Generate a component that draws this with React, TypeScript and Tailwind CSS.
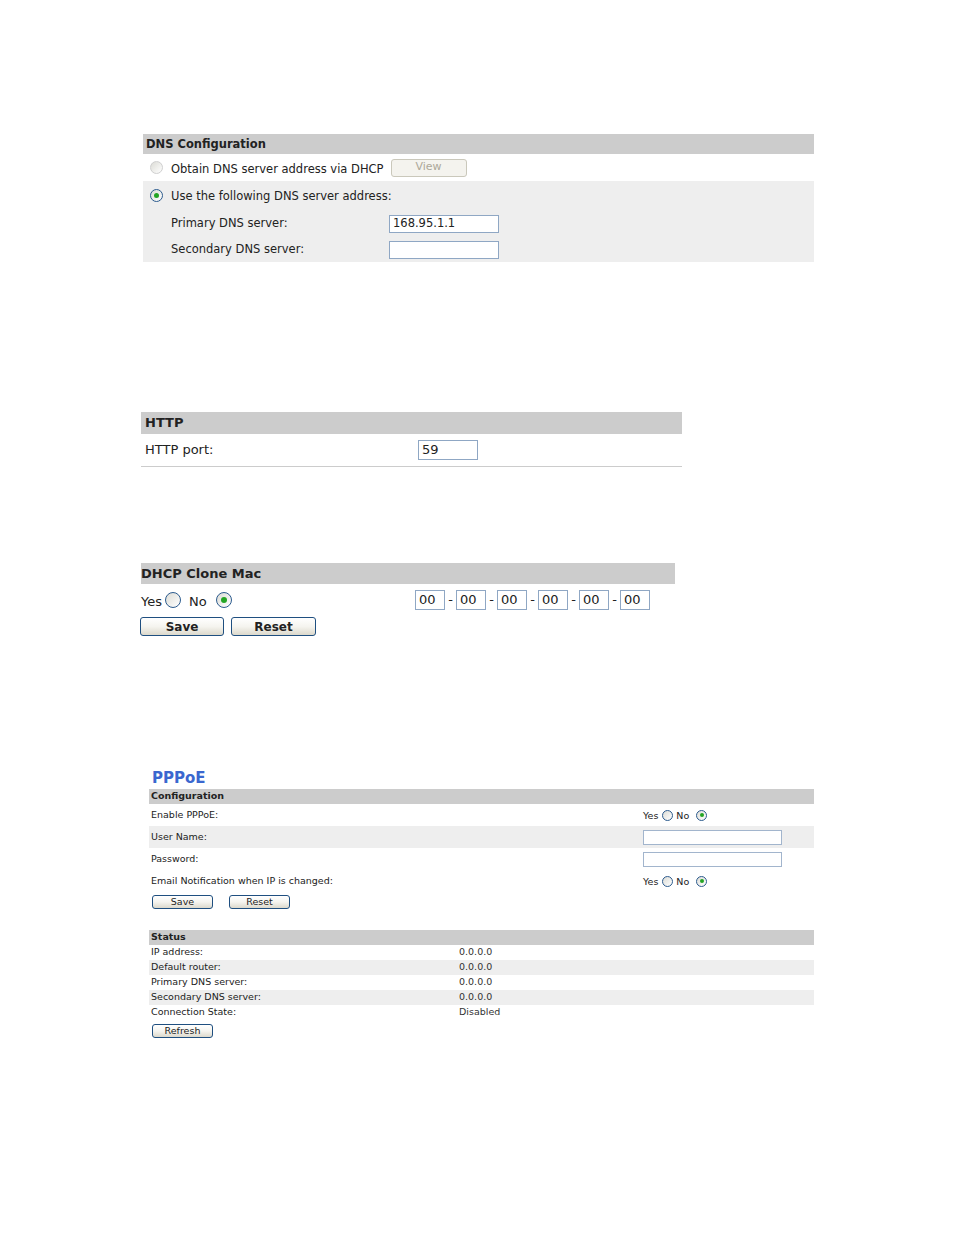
import React from "react";

const font = "font-['DejaVu_Sans','Verdana',sans-serif]";

function Radio({
  size,
  checked,
  light,
}: {
  size: "sm" | "md" | "lg";
  checked?: boolean;
  light?: boolean;
}) {
  const box =
    size === "lg" ? "w-[16px] h-[16px]" : size === "md" ? "w-[13px] h-[13px]" : "w-[11px] h-[11px]";
  const dot = size === "lg" ? "w-[6px] h-[6px]" : size === "md" ? "w-[5px] h-[5px]" : "w-[4px] h-[4px]";
  return (
    <span
      className={`${box} flex items-center justify-center rounded-full border bg-gradient-to-br from-[#dcdcd6] to-white ${
        light ? "border-[#cfcfcf]" : "border-[#2c5b8e]"
      }`}
    >
      {checked && <span className={`${dot} rounded-full bg-[#24a524]`} />}
    </span>
  );
}

function Btn({ label, className }: { label: string; className: string }) {
  return (
    <button
      className={`${className} flex items-center justify-center rounded-[3px] border border-[#1f4f80] bg-gradient-to-b from-white via-[#f5f4ef] to-[#dcd9cc] text-[#222]`}
    >
      {label}
    </button>
  );
}

function DnsSection() {
  return (
    <div className="ml-[143px] w-[671px] text-[11.5px] text-[#222]">
      <div className="h-[20px] bg-[#cccccc] pl-[3px] pt-[2px] flex items-center font-bold">DNS Configuration</div>
      <div className="h-[27px] flex items-center">
        <span className="ml-[7px] flex">
          <Radio size="md" light />
        </span>
        <span className="ml-[8px] mt-[4px]">Obtain DNS server address via DHCP</span>
        <button className="ml-[7px] w-[76px] h-[18px] rounded-[3px] border border-[#cac8bb] bg-[#f4f3ee] text-[#aca899] text-[11px] flex items-center justify-center">
          View
        </button>
      </div>
      <div className="bg-[#eeeeee] h-[81px] flex flex-col">
        <div className="h-[29px] flex items-center">
          <span className="ml-[7px] flex">
            <Radio size="md" checked />
          </span>
          <span className="ml-[8px] mt-[2px]">Use the following DNS server address:</span>
        </div>
        <div className="h-[27px] flex items-center pl-[28px]">
          <span className="w-[218px]">Primary DNS server:</span>
          <span className="w-[110px] h-[18px] bg-white border border-[#8fa7c4] flex items-center pl-[3px]">
            168.95.1.1
          </span>
        </div>
        <div className="h-[25px] flex items-center pl-[28px]">
          <span className="w-[218px] mt-[1px]">Secondary DNS server:</span>
          <span className="w-[110px] h-[18px] bg-white border border-[#8fa7c4]" />
        </div>
      </div>
    </div>
  );
}

function HttpSection() {
  return (
    <div className="ml-[141px] mt-[150px] w-[541px] text-[13px] text-[#222]">
      <div className="h-[22px] bg-[#cccccc] pl-[4px] flex items-center font-bold">HTTP</div>
      <div className="h-[33px] flex items-center pl-[4px] border-b border-[#cccccc]">
        <span className="w-[273px]">HTTP port:</span>
        <span className="w-[60px] h-[20px] bg-white border border-[#8fa7c4] flex items-center pl-[3px]">59</span>
      </div>
    </div>
  );
}

function CloneMacSection() {
  const octets = ["00", "00", "00", "00", "00", "00"];
  return (
    <div className="ml-[141px] mt-[96px] w-[534px] text-[13px] text-[#222]">
      <div className="h-[21px] bg-[#cccccc] flex items-center font-bold">DHCP Clone Mac</div>
      <div className="h-[28px] pt-[4px] flex items-center">
        <span className="mt-[3px]">Yes</span>
        <span className="ml-[3px] flex">
          <Radio size="lg" />
        </span>
        <span className="ml-[8px] mt-[3px]">No</span>
        <span className="ml-[9px] flex">
          <Radio size="lg" checked />
        </span>
        <div className="ml-auto flex items-center mr-[25px]">
          {octets.map((o, i) => (
            <React.Fragment key={i}>
              {i > 0 && <span className="w-[11px] text-center">-</span>}
              <span className="w-[30px] h-[20px] bg-white border border-[#8fa7c4] flex items-center pl-[3px]">{o}</span>
            </React.Fragment>
          ))}
        </div>
      </div>
      <div className="flex gap-[7px] -ml-[1px] mt-[5px]">
        <Btn label="Save" className="w-[84px] h-[19px] font-bold text-[12px]" />
        <Btn label="Reset" className="w-[85px] h-[19px] font-bold text-[12px]" />
      </div>
    </div>
  );
}

function YesNo() {
  return (
    <span className="flex items-center">
      <span className="mt-[2px]">Yes</span>
      <span className="ml-[4px] flex">
        <Radio size="sm" />
      </span>
      <span className="ml-[3px] mt-[2px]">No</span>
      <span className="ml-[7px] flex">
        <Radio size="sm" checked />
      </span>
    </span>
  );
}

function PppoeSection() {
  const status = [
    ["IP address:", "0.0.0.0"],
    ["Default router:", "0.0.0.0"],
    ["Primary DNS server:", "0.0.0.0"],
    ["Secondary DNS server:", "0.0.0.0"],
    ["Connection State:", "Disabled"],
  ];
  return (
    <div className="ml-[149px] mt-[131px] w-[665px] text-[9.5px] text-[#222]">
      <div className="h-[22px] pl-[3px] flex items-center text-[15px] font-bold text-[#3a67cf]">PPPoE</div>
      <div className="h-[15px] bg-[#cccccc] pl-[2px] flex items-center font-bold">Configuration</div>
      <div className="h-[22px] flex items-center pl-[2px]">
        <span className="w-[492px]">Enable PPPoE:</span>
        <YesNo />
      </div>
      <div className="h-[22px] flex items-center pl-[2px] bg-[#eeeeee]">
        <span className="w-[492px]">User Name:</span>
        <span className="w-[139px] h-[15px] bg-white border border-[#a2b5cd]" />
      </div>
      <div className="h-[22px] flex items-center pl-[2px]">
        <span className="w-[492px]">Password:</span>
        <span className="w-[139px] h-[15px] bg-white border border-[#a2b5cd]" />
      </div>
      <div className="h-[22px] flex items-center pl-[2px]">
        <span className="w-[492px]">Email Notification when IP is changed:</span>
        <YesNo />
      </div>
      <div className="flex gap-[16px] pl-[3px] mt-[3px]">
        <Btn label="Save" className="w-[61px] h-[14px] text-[9.5px]" />
        <Btn label="Reset" className="w-[61px] h-[14px] text-[9.5px]" />
      </div>

      <div className="mt-[21px] h-[15px] bg-[#cccccc] pl-[2px] flex items-center font-bold">Status</div>
      {status.map(([k, v], i) => (
        <div key={k} className={`h-[15px] flex items-center pl-[2px] ${i % 2 === 1 ? "bg-[#eeeeee]" : ""}`}>
          <span className="w-[308px]">{k}</span>
          <span className="text-[#333]">{v}</span>
        </div>
      ))}
      <div className="pl-[3px] mt-[4px]">
        <Btn label="Refresh" className="w-[61px] h-[14px] text-[9.5px]" />
      </div>
    </div>
  );
}

export default function App() {
  return (
    <div className={`${font} w-[954px] h-[1235px] bg-white pt-[134px]`}>
      <DnsSection />
      <HttpSection />
      <CloneMacSection />
      <PppoeSection />
    </div>
  );
}
